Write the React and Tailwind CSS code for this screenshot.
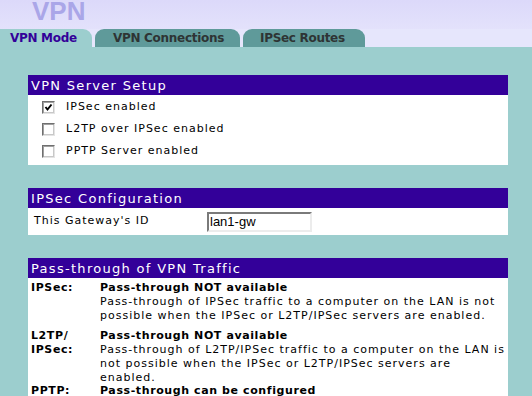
import React from 'react';

const font = { fontFamily: '"DejaVu Sans", Verdana, sans-serif' };

function Checkbox({ checked }) {
  return (
    <span className="relative inline-block h-[13px] w-[13px] shrink-0 border border-t-[#6f6f6f] border-l-[#6f6f6f] border-b-[#e4e4e4] border-r-[#e4e4e4] bg-white shadow-[inset_1px_1px_0_#a0a0a0,inset_-1px_-1px_0_#c8c8c8]">
      {checked && (
        <svg viewBox="0 0 11 11" className="absolute left-0 top-0 h-[11px] w-[11px]">
          <path d="M2.5 5 L4.5 7.5 L8.5 2.5" fill="none" stroke="#000" strokeWidth="2" />
        </svg>
      )}
    </span>
  );
}

function Panel({ title, children }) {
  return (
    <div className="w-[480px] bg-white">
      <div className="flex h-[20px] items-center bg-[#330099] pl-[3px] text-[13px] leading-none tracking-[1.3px] text-white">
        {title}
      </div>
      {children}
    </div>
  );
}

function Lines({ lines }) {
  return lines.map((l) => (
    <div key={l} className="whitespace-nowrap">
      {l}
    </div>
  ));
}

const tabBase = 'flex h-[18px] items-center rounded-t-[9px] text-[12px] font-bold tracking-[-0.3px]';

export default function App() {
  const vpnRows = [
    ['IPSec enabled', true],
    ['L2TP over IPSec enabled', false],
    ['PPTP Server enabled', false],
  ];

  return (
    <div className="flex h-[396px] w-[532px] flex-col overflow-hidden bg-[#9ccece]" style={font}>
      <div className="bg-gradient-to-b from-[#dcd9fa] to-[#e8e7fc]">
        <div className="flex h-[29px] flex-col pl-[32px]">
          <div
            className="-mt-[2px] text-[26px] font-bold leading-[26px] text-[#aaa6e8]"
            style={{ fontFamily: '"Liberation Sans", Arial, sans-serif' }}
          >
            VPN
          </div>
        </div>
        <div className="flex gap-[3px] bg-[#e6e6fc]">
          <div className={`${tabBase} w-[92px] rounded-tl-none bg-[#9ccece] pl-[10px] text-[#330099]`}>VPN Mode</div>
          <div className={`${tabBase} w-[145px] bg-[#5f9a9a] pl-[18px] text-[#2e3434]`}>VPN Connections</div>
          <div className={`${tabBase} w-[122px] bg-[#5f9a9a] pl-[17px] text-[#2e3434]`}>IPSec Routes</div>
        </div>
      </div>

      <div className="flex flex-col gap-[23px] pl-[28px] pt-[28px] text-[11px] tracking-[1px] text-black">
        <Panel title="VPN Server Setup">
          <div className="pb-[3px] pt-[1px]">
            {vpnRows.map(([label, checked]) => (
              <div key={label} className="flex h-[22px] items-center pl-[14px]">
                <Checkbox checked={checked} />
                <span className="ml-[11px]">{label}</span>
              </div>
            ))}
          </div>
        </Panel>

        <Panel title="IPSec Configuration">
          <div className="flex h-[27px] items-center">
            <span className="w-[179px] pl-[6px]">This Gateway's ID</span>
            <input
              readOnly
              value="lan1-gw"
              className="h-[20px] w-[105px] border-2 border-t-[#7a7a7a] border-l-[#7a7a7a] border-b-[#ececec] border-r-[#ececec] bg-white px-[1px] text-[13px] tracking-normal text-black outline-none"
              style={{ fontFamily: '"Liberation Sans", Arial, sans-serif' }}
            />
          </div>
        </Panel>

        <Panel title="Pass-through of VPN Traffic">
          <div className="pt-[3px] leading-[14px]">
            <div className="flex pb-[6px]">
              <div className="w-[72px] shrink-0 pl-[3px] font-bold tracking-[0.6px]">IPSec:</div>
              <div>
                <div className="font-bold tracking-[0.6px]">Pass-through NOT available</div>
                <Lines
                  lines={[
                    'Pass-through of IPSec traffic to a computer on the LAN is not',
                    'possible when the IPSec or L2TP/IPSec servers are enabled.',
                  ]}
                />
              </div>
            </div>
            <div className="flex">
              <div className="w-[72px] shrink-0 pl-[3px] font-bold tracking-[0.6px]">
                L2TP/
                <br />
                IPSec:
              </div>
              <div>
                <div className="font-bold tracking-[0.6px]">Pass-through NOT available</div>
                <Lines
                  lines={[
                    'Pass-through of L2TP/IPSec traffic to a computer on the LAN is',
                    'not possible when the IPSec or L2TP/IPSec servers are',
                    'enabled.',
                  ]}
                />
              </div>
            </div>
            <div className="-mt-[1px] flex">
              <div className="w-[72px] shrink-0 pl-[3px] font-bold tracking-[0.6px]">PPTP:</div>
              <div>
                <div className="font-bold tracking-[0.6px]">Pass-through can be configured</div>
                <Lines lines={['Pass-through of PPTP traffic to a computer on the LAN can be', 'configured.']} />
              </div>
            </div>
          </div>
        </Panel>
      </div>
    </div>
  );
}
